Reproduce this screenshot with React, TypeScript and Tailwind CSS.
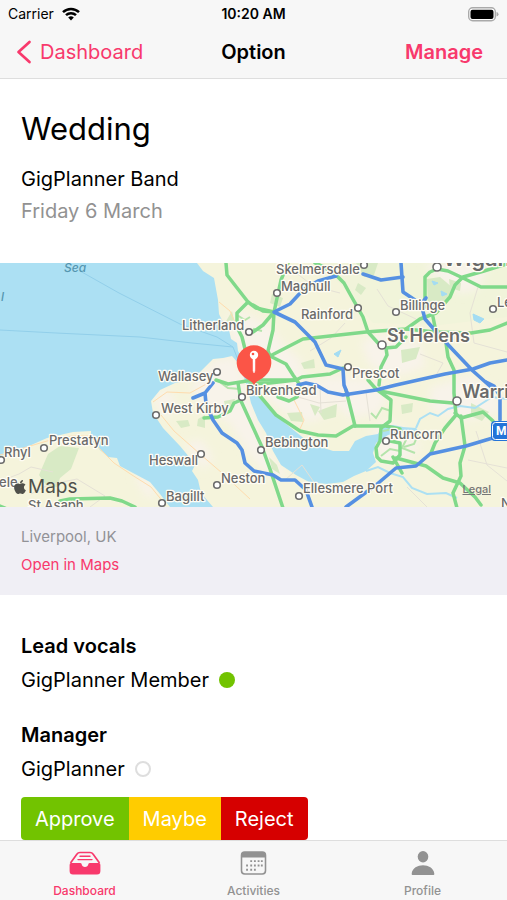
import { FaApple } from 'react-icons/fa';

interface Place {
  name: string;
  x: number;
  y: number;
  dot?: [number, number];
  size?: number;
}

interface Tab {
  label: string;
  icon: () => React.ReactNode;
  active?: boolean;
}

const PLACES: Place[] = [
  { name: 'Skelmersdale', x: 276, y: 11, dot: [364, 2] },
  { name: 'Maghull', x: 281, y: 28, dot: [277, 30] },
  { name: 'Rainford', x: 301, y: 56, dot: [358, 45] },
  { name: 'Billinge', x: 400, y: 47, dot: [396, 49] },
  { name: 'Le', x: 497, y: 44, dot: [493, 46] },
  { name: 'Wigan', x: 443, y: 3, dot: [437, 4], size: 22 },
  { name: 'St Helens', x: 387, y: 79, dot: [382, 82], size: 18 },
  { name: 'Litherland', x: 182, y: 67, dot: [249, 69] },
  { name: 'Prescot', x: 352, y: 115, dot: [348, 104] },
  { name: 'Wallasey', x: 158, y: 118, dot: [217, 109] },
  { name: 'Birkenhead', x: 246, y: 132, dot: [242, 134] },
  { name: 'West Kirby', x: 161, y: 150, dot: [156, 152] },
  { name: 'Warri', x: 462, y: 135, dot: [457, 138], size: 18 },
  { name: 'Runcorn', x: 390, y: 176, dot: [386, 178] },
  { name: 'Bebington', x: 265, y: 184, dot: [261, 187] },
  { name: 'Heswall', x: 149, y: 202, dot: [201, 191] },
  { name: 'Prestatyn', x: 49, y: 182, dot: [44, 185] },
  { name: 'Rhyl', x: 4, y: 194, dot: [1, 197] },
  { name: 'Neston', x: 221, y: 220, dot: [217, 222] },
  { name: 'Ellesmere Port', x: 303, y: 230, dot: [299, 233] },
  { name: 'Bagillt', x: 166, y: 238, dot: [162, 240] },
  { name: 'St Asaph', x: 28, y: 247 },
  { name: 'ele', x: -1, y: 224 },
  { name: 'N', x: 501, y: 245 },
];

const GREEN_ROADS = [
  'M226 0L227 12L248 39L256 45L274 49',
  'M248 39L237 50L237 64L242 74L246 90',
  'M288 0L281 17L274 49L273 67L268 88L270 93',
  'M253 69L263 62L274 49',
  'M253 42L263 48L274 49',
  'M315 0L322 3L336 12L344 20L350 31L363 54L368 69L378 80L386 85L387 92L381 104L379 122',
  'M270 93L303 76L366 69L406 66L420 56L436 50L450 34L455 22L463 14L484 8L507 1',
  'M406 66L435 69L471 70L490 67L507 60',
  'M425 44L425 14L430 9L437 6L448 8L463 15L481 24L507 24',
  'M433 54L435 64L446 80L448 94L454 107L454 130L456 152L445 165L435 180L431 190',
  'M386 85L396 84L406 74',
  'M216 117L228 121L253 117L296 117L302 114L330 111L343 105',
  'M250 121L270 120L296 117',
  'M270 93L286 101L293 112L300 122L297 134L289 138L278 134',
  'M260 133L276 152L300 168L318 172L336 173L353 163L386 163L400 166',
  'M346 127L355 163',
  'M368 117L376 126L391 137L390 158L381 165L380 178L376 185L377 194L381 198L393 200L400 192L400 180L390 178',
  'M380 128L400 132L430 138L453 140',
  'M455 150L461 155L483 149L493 158',
  'M461 153L465 183L460 200L461 213L453 230L457 245',
  'M393 194L402 210M396 195L426 203L443 215L460 220L475 234L481 242',
  'M238 120L241 138L262 184L270 206L283 245',
  'M241 137L234 140L230 148L218 154L204 155',
  'M60 238L70 236L110 235L122 238L135 244',
  'M0 243L5 245',
];

const MINOR_GREEN = [
  'M250 71L254 66L262 68',
  'M217 117L228 125L240 126',
  'M237 52L245 57L250 54',
  'M383 168L397 165L408 173L402 185L415 190',
  'M371 150L376 155L382 145L391 148',
  'M381 193L390 186L400 188',
  'M400 168L418 172L414 181L404 184',
];

const BLUE_ROADS = [
  'M401 0L403 29L421 41L425 56L440 73L453 87L473 108L491 124',
  'M403 14L381 17L363 11',
  'M336 13L318 18L303 27L290 41L274 49L295 59L315 79L326 102L343 106L344 122L348 132',
  'M507 97L490 100L473 106L445 111L396 122L376 127L343 132L328 129L316 122',
  'M507 171L486 177L466 183L430 191L416 203L396 205L376 222L346 244',
  'M213 120L205 130L193 135M205 130L206 141L213 157L222 170L237 180L242 187L245 200L254 208L273 212L281 217L295 217L306 227L312 244',
  'M486 119L494 123L500 133L500 157',
  'M421 41L426 35',
  'M298 122L306 120L315 122',
];

const WOODS = [
  'M48 191L60 183L79 185L71 206L60 215L57 224L46 222L39 212Z',
  'M198 156L205 152L205 165L197 163Z',
  'M176 158L188 157L190 163L181 165Z',
  'M356 0L378 0L374 12L364 14Z',
  'M427 16L440 14L453 25L445 42L428 45Z',
  'M449 16L461 20L460 28L450 25Z',
  'M225 60L232 48L234 57L230 63Z',
  'M318 148L337 141L336 154L324 157Z',
  'M301 100L314 96L315 105L304 106Z',
  'M287 150L302 149L303 159L291 158Z',
  'M401 87L420 84L416 96L402 100Z',
  'M401 142L413 140L412 149L402 151Z',
  'M471 140L489 149L482 158L471 153Z',
  'M310 141L320 144L315 153Z',
  'M272 31L283 35L280 44L270 40Z',
  'M358 20L366 25L361 32L355 27Z',
  'M224 138L235 136L233 144L225 143Z',
  'M269 194L277 202L280 211L272 206Z',
];

const TOWNS = [
  'M226 55L240 48L252 54L272 64L283 82L300 96L304 112L322 118L329 132L330 150L310 160L286 150L263 134L243 91L232 78Z',
  'M232 93L244 113L251 140L263 178L275 199L290 212L270 215L248 190L230 160L205 145L190 125L213 98Z',
  'M361 79L382 70L398 78L420 80L425 104L402 112L382 111L368 99Z',
  'M430 125L470 112L499 130L500 150L463 158L431 147Z',
  'M371 165L390 157L409 169L421 184L403 200L381 201Z',
  'M425 0L490 0L478 26L462 31L434 14Z',
  'M322 113L367 116L389 126L380 150L350 155L330 138Z',
  'M154 137L164 125L175 134L171 154L159 151Z',
  'M184 180L202 177L213 195L203 207L193 193Z',
  'M134 212L146 214L157 231L147 235Z',
];

const WATER =
  'M0 0H197L203 8L214 15L218 37L219 51L224 61L229 67L231 76L237 80L238 88L243 96L249 110L254 124L262 138L270 145L285 160L296 169L306 177L321 184L333 188L349 188L355 178L366 173L378 171L382 164L393 162L403 164L416 165L419 169L401 169L388 172L376 180L373 190L376 199L366 208L354 213L343 219L327 221L309 219L296 212L281 202L273 188L266 170L258 157L251 140L247 123L243 112L239 101L232 93L223 95L213 96L200 109L190 117L175 120L160 127L151 138L153 150L163 165L180 183L190 195L195 202L192 208L198 217L201 230L213 244H170L160 231L150 219L133 210L120 203L117 195L108 194L100 187L91 177L91 168L73 169L47 175L20 187L0 193Z';

function LiverpoolMap() {
  return (
    <svg
      viewBox="0 0 507 244"
      preserveAspectRatio="xMidYMid slice"
      className="block h-[244px] w-full"
      role="img"
      aria-label="Map of Liverpool"
    >
      <filter id="soft">
        <feGaussianBlur stdDeviation="4" />
      </filter>
      <rect width="507" height="244" fill="#f5f4dc" />
      <path d="M253 0H507V54L440 62L373 60L322 0Z" fill="#f1f4da" />
      <g fill="#f8f3ea" filter="url(#soft)">
        {TOWNS.map((d) => (
          <path key={d} d={d} />
        ))}
      </g>
      <g fill="#d8eac5">
        {WOODS.map((d) => (
          <path key={d} d={d} />
        ))}
      </g>
      <path d={WATER} fill="#ace0f3" />
      <path
        d="M416 165L420 156L430 150L438 153L448 146L460 143L475 145L492 134L507 136M366 208L378 204L390 210L403 214L412 225L427 231L446 230L457 235"
        fill="none"
        stroke="#ace0f3"
        strokeWidth="2"
      />
      <path
        d="M432 18L438 20L434 22ZM441 28L447 31L442 33ZM473 51L484 56L480 60L474 57ZM334 91L341 87L338 94Z"
        fill="#a3dcf3"
        stroke="#a3dcf3"
        strokeWidth="1"
      />
      <g fill="none" stroke="#ffdcae" strokeWidth="1">
        <path d="M0 192L20 186L47 178L72 173L90 173L98 184L114 200L132 212L151 224L164 240" />
        <path d="M153 139L167 129L190 130L210 119M161 152L174 168L200 191L222 210L250 236M293 135L304 157L300 166" />
        <path d="M219 39L230 48L237 64" />
      </g>
      <g fill="none" stroke="#e5e1d6" strokeWidth="1">
        <path d="M0 218L19 211L31 204L53 209M31 231L48 222L77 216L105 233M90 244L105 233" />
        <path d="M290 5L313 23L340 30M310 88L331 75L345 60M377 26L388 43L416 56M478 24L470 50L474 80L507 89M435 114L443 100L420 91" />
        <path d="M298 134L319 140L346 138M320 122L321 150M366 129L370 158M285 217L302 202L318 225M407 224L427 244M468 197L507 205M476 168L487 202L507 218" />
      </g>
      <g fill="none" stroke="#92cfea" strokeWidth="1">
        <path d="M80 8L119 30L180 61L217 74L233 84L243 110" />
        <path d="M0 67L56 70L140 74L192 80L233 84" />
      </g>
      <g fill="none" stroke="#b4e4ab" strokeWidth="2">
        {MINOR_GREEN.map((d) => (
          <path key={d} d={d} />
        ))}
      </g>
      <g fill="none" stroke="#80d98a" strokeWidth="3.5" strokeLinejoin="round" strokeLinecap="round">
        {GREEN_ROADS.map((d) => (
          <path key={d} d={d} />
        ))}
      </g>
      <g fill="none" stroke="#5590e2" strokeWidth="3.6" strokeLinejoin="round" strokeLinecap="round">
        {BLUE_ROADS.map((d) => (
          <path key={d} d={d} />
        ))}
      </g>

      {/* Place names */}
      <g
        fontFamily="Inter, 'Liberation Sans', sans-serif"
        fill="#6a6a6a"
        stroke="#fffdf5"
        strokeWidth="2.5"
        strokeLinejoin="round"
        paintOrder="stroke"
      >
        {PLACES.map((p) => (
          <text key={p.name} x={p.x} y={p.y} fontSize={p.size ?? 13} fontWeight={p.size ? 600 : 500}>
            {p.name}
          </text>
        ))}
      </g>
      <g fill="#fff" stroke="#6c6c6c" strokeWidth="1.6">
        {PLACES.map((p) =>
          p.dot ? <circle key={p.name} cx={p.dot[0]} cy={p.dot[1]} r={p.size ? 4 : 3.3} /> : null
        )}
      </g>
      <g
        fontFamily="Inter, 'Liberation Sans', sans-serif"
        fontStyle="italic"
        fontSize="12"
        fontWeight="500"
        fill="#5596b0"
      >
        <text x="64" y="9">Sea</text>
        <text x="1" y="38">l</text>
      </g>

      {/* Motorway shield */}
      <rect x="491" y="158" width="30" height="20" rx="4" fill="#2474d8" />
      <rect x="492.5" y="159.5" width="27" height="17" rx="3" fill="none" stroke="#fff" strokeWidth="1" />
      <text x="496" y="172" fontFamily="Roboto, sans-serif" fontSize="12" fontWeight="700" fill="#fff">
        M5
      </text>

      {/* Pin */}
      <path d="M254 122C251 117 247 117 243 113A17.3 17.3 0 1 1 265 113C261 117 257 117 254 122Z" fill="#fb5547" />
      <circle cx="254" cy="92" r="4.2" fill="#fff" />
      <path d="M253 95H255L254.900 108L254 110L253.100 108Z" fill="#fff" stroke="#fff" strokeWidth=".5" />
      <circle cx="253" cy="91" r="1.3" fill="#fb5547" />
    </svg>
  );
}

function WifiIcon() {
  return (
    <svg viewBox="0 0 18 14" className="h-[14px] w-[18px]" aria-hidden="true">
      <g fill="none" stroke="#000" strokeWidth="2.5">
        <path d="M1 5.1A11.6 11.6 0 0 1 17 5.1" />
        <path d="M4 8.2A7.2 7.2 0 0 1 14 8.2" />
      </g>
      <path d="M6.2 10.5A4 4 0 0 1 11.8 10.5L9 13.4Z" />
    </svg>
  );
}

function BatteryIcon() {
  return (
    <svg viewBox="0 0 31 15" className="h-[15px] w-[31px]" aria-label="Battery full">
      <rect x=".7" y=".8" width="26.6" height="13" rx="4" fill="#fff" stroke="#aaa" strokeWidth="1.4" />
      <rect x="2.5" y="2.7" width="23" height="9.2" rx="2" />
      <path d="M28.5 5Q30.5 5.500 30.5 7.3T28.5 9.6Z" fill="#aaa" />
    </svg>
  );
}

function TrayIcon() {
  return (
    <svg viewBox="0 0 32 24" className="h-6 w-8" aria-hidden="true">
      <path
        d="M1.5 12L8 3Q9 1.5 11 1.5H21Q23 1.5 24 3L30.5 12"
        fill="none"
        stroke="currentColor"
        strokeWidth="1.7"
      />
      <path
        d="M.6 14Q.6 12 2 12H11Q12.5 12 12.6 13C13 17 19 17 19.4 13Q19.5 12 21 12H30Q31.4 12 31.4 14V20Q31.4 23.5 28 23.5H4Q.6 23.5 .6 20Z"
        fill="currentColor"
      />
      <path d="M11 5.2H21M9 8.6H23" stroke="currentColor" strokeWidth="1.4" strokeLinecap="round" />
    </svg>
  );
}

function CalendarIcon() {
  return (
    <svg viewBox="0 0 28 26" className="h-6 w-[27px]" aria-hidden="true">
      <rect x="1" y="1" width="26" height="24" rx="3.5" fill="none" stroke="currentColor" strokeWidth="1.7" />
      <path d="M1 7V4Q1 1 4 1H24Q27 1 27 4V7Z" fill="currentColor" />
      <g fill="currentColor">
        <path d="M10.5 10h2v2h-2zM14.5 10h2v2h-2zM18.5 10h2v2h-2zM22 10h2v2h-2z" />
        <path d="M6 14.7h2v2h-2zM10.5 14.7h2v2h-2zM14.5 14.7h2v2h-2zM18.5 14.7h2v2h-2zM22 14.7h2v2h-2z" />
        <path d="M6 19.3h2v2h-2zM10.5 19.3h2v2h-2zM14.5 19.3h2v2h-2z" />
      </g>
    </svg>
  );
}

function PersonIcon() {
  return (
    <svg viewBox="0 0 24 24" className="size-6" aria-hidden="true" fill="currentColor">
      <ellipse cx="12" cy="5.8" rx="5.3" ry="5.7" />
      <path d="M1.5 24Q.5 24 .7 22.5C2 11.5 22 11.5 23.3 22.5Q23.5 24 22.5 24Z" />
    </svg>
  );
}

const TABS: Tab[] = [
  { label: 'Dashboard', icon: TrayIcon, active: true },
  { label: 'Activities', icon: CalendarIcon },
  { label: 'Profile', icon: PersonIcon },
];

export default function App() {
  return (
    <div className="flex h-screen flex-col bg-white font-[Inter,'Liberation_Sans',sans-serif] text-black">
      <header className="shrink-0 border-b border-[#dedede] bg-[#f7f7f7]">
        <div className="grid h-7 grid-cols-3 items-center px-2 text-sm">
          <div className="flex items-center gap-2">
            <span>Carrier</span>
            <WifiIcon />
          </div>
          <div className="text-center font-semibold">10:20 AM</div>
          <div className="flex justify-end">
            <BatteryIcon />
          </div>
        </div>
        <nav className="grid h-[50px] grid-cols-[1fr_auto_1fr] items-center px-4 pb-0.5 text-xl">
          <a href="#dashboard" className="flex items-center gap-2 text-[#f8396c]">
            <svg viewBox="0 0 15 24" className="h-6 w-4" fill="none" stroke="currentColor" strokeWidth="2.7" aria-hidden="true">
              <path d="M13 2L2 12L13 22" strokeLinecap="round" strokeLinejoin="round" />
            </svg>
            Dashboard
          </a>
          <h1 className="font-semibold">Option</h1>
          <button type="button" className="mr-2 justify-self-end font-semibold text-[#f8396c]">
            Manage
          </button>
        </nav>
      </header>

      <main className="min-h-0 flex-1 overflow-y-auto [scrollbar-width:none]">
        <section className="px-[21px] pt-7 pb-9">
          <h2 className="text-[31px] leading-[44px]">Wedding</h2>
          <p className="mt-3 text-xl leading-8">GigPlanner Band</p>
          <p className="text-xl leading-8 text-[#929292]">Friday 6 March</p>
        </section>

        <section className="bg-[#f0eff5]">
          <div className="relative">
            <LiverpoolMap />
            <div className="absolute bottom-2 left-3 flex items-center text-[19px] leading-6 text-[#4f504a]">
              <FaApple className="size-4" aria-hidden="true" />
              Maps
            </div>
            <a href="#legal" className="absolute right-4 bottom-2.5 text-[11px] leading-4 font-medium text-[#777] underline">
              Legal
            </a>
          </div>
          <div className="flex flex-col items-start px-[21px] py-4 text-[15px]">
            <p className="leading-7 text-[#929297]">Liverpool, UK</p>
            <a href="#maps" className="leading-7 text-[#f8396c]">
              Open in Maps
            </a>
          </div>
        </section>

        <section className="px-[21px] pt-[35px] text-xl">
          <h3 className="leading-8 font-semibold">Lead vocals</h3>
          <div className="flex items-center gap-2.5 leading-9">
            <span>GigPlanner Member</span>
            <span className="size-4 rounded-full bg-[#72c300]" />
          </div>

          <h3 className="mt-[21px] leading-8 font-semibold">Manager</h3>
          <div className="flex items-center gap-2.5 leading-9">
            <span>GigPlanner</span>
            <span className="size-4 rounded-full border-2 border-[#dedede]" />
          </div>

          <div className="mt-2.5 flex h-[43px] w-fit overflow-hidden rounded text-white">
            <button type="button" className="bg-[#72c300] px-3.5">Approve</button>
            <button type="button" className="bg-[#fc0] px-3.5">Maybe</button>
            <button type="button" className="bg-[#d60000] px-3.5">Reject</button>
          </div>
        </section>
      </main>

      <nav className="grid h-[60px] shrink-0 grid-cols-3 border-t border-[#dedede] bg-[#f7f7f7]">
        {TABS.map(({ label, icon: Icon, active }) => (
          <a
            key={label}
            href={`#${label.toLowerCase()}`}
            className={`flex flex-col items-center gap-2 pt-2.5 text-xs leading-4 font-medium ${
              active ? 'text-[#f8396c]' : 'text-[#929292]'
            }`}
          >
            <Icon />
            {label}
          </a>
        ))}
      </nav>
    </div>
  );
}
